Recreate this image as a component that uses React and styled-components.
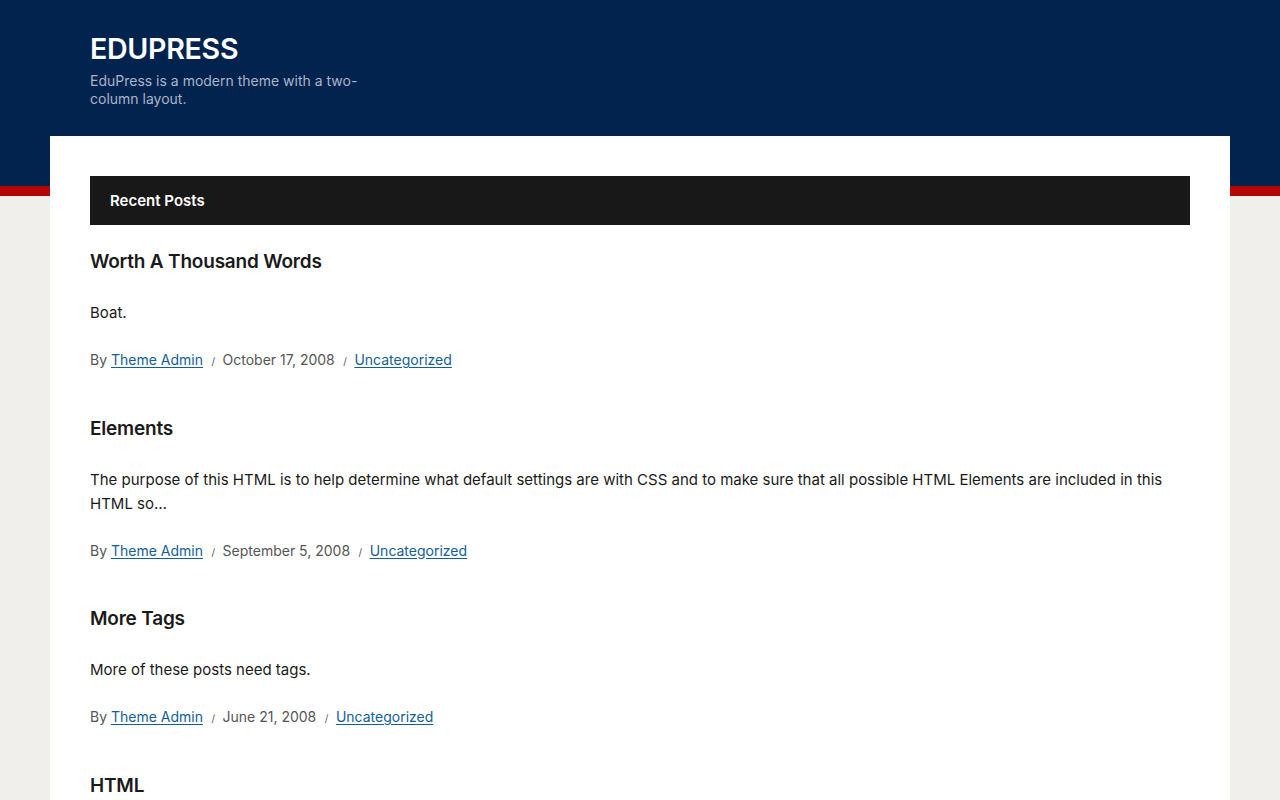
import React from "react";
import styled, { createGlobalStyle } from "styled-components";

const GlobalStyle = createGlobalStyle`
  * {
    box-sizing: border-box;
  }
  body {
    margin: 0;
    font-family: Inter, "Noto Sans", sans-serif;
    /* navy header band, red rule, then the page colour */
    background: linear-gradient(
      to bottom,
      #03234f 0,
      #03234f 186px,
      #b40505 186px,
      #b40505 196px,
      #f0efeb 196px
    );
    min-height: 100vh;
  }
`;

const posts = [
  {
    title: "Worth A Thousand Words",
    excerpt: "Boat.",
    date: "October 17, 2008",
  },
  {
    title: "Elements",
    excerpt:
      "The purpose of this HTML is to help determine what default settings are with CSS and to make sure that all possible HTML Elements are included in this HTML so…",
    date: "September 5, 2008",
  },
  {
    title: "More Tags",
    excerpt: "More of these posts need tags.",
    date: "June 21, 2008",
  },
  {
    title: "HTML",
    excerpt: "",
    date: "",
  },
];

const App = () => {
  return (
    <>
      <GlobalStyle />
      <Header>
        <SiteTitle>EDUPRESS</SiteTitle>
        <Tagline>EduPress is a modern theme with a two-column layout.</Tagline>
      </Header>
      <Main>
        <WidgetTitle>Recent Posts</WidgetTitle>
        {posts.map((post, index) => (
          <Post key={index}>
            <PostTitle>{post.title}</PostTitle>
            {post.excerpt && <Excerpt>{post.excerpt}</Excerpt>}
            {post.date && (
              <Meta>
                By <Link href="#">Theme Admin</Link>
                <Sep>/</Sep>
                {post.date}
                <Sep>/</Sep>
                <Link href="#">Uncategorized</Link>
              </Meta>
            )}
          </Post>
        ))}
      </Main>
    </>
  );
};

const Header = styled.header`
  height: 136px;
  padding: 32px 90px 0;
`;

const SiteTitle = styled.h1`
  margin: 0;
  font-size: 28.6px;
  font-weight: 600;
  line-height: 34px;
  letter-spacing: -0.3px;
  color: #ffffff;
`;

const Tagline = styled.p`
  margin: 6px 0 0;
  width: 272px;
  font-size: 14px;
  line-height: 18px;
  color: #a9b5c9;
`;

const Main = styled.main`
  margin: 0 50px;
  padding: 40px 40px 0;
  background: #ffffff;
  min-height: 664px;
  overflow: hidden;
`;

const WidgetTitle = styled.h2`
  margin: 0;
  height: 49px;
  display: flex;
  align-items: center;
  padding: 0 20px;
  background: #181818;
  color: #ffffff;
  font-size: 15px;
  font-weight: 600;
`;

const Post = styled.article`
  padding-top: 23px;
  padding-bottom: 18.5px;
`;

const PostTitle = styled.h3`
  margin: 0;
  font-size: 19px;
  line-height: 28px;
  font-weight: 600;
  letter-spacing: -0.2px;
  color: #1a1a1a;
`;

const Excerpt = styled.p`
  margin: 25px 0 0;
  font-size: 15px;
  line-height: 24px;
  color: #1a1a1a;
`;

const Meta = styled.div`
  margin-top: 23px;
  font-size: 14px;
  line-height: 24px;
  color: #555555;
`;

const Link = styled.a`
  color: #135e96;
  text-decoration: underline;
  text-underline-offset: 2px;
`;

const Sep = styled.span`
  display: inline-block;
  margin: 0 7.5px 0 8.5px;
  font-size: 10px;
  color: #555555;
`;

export default App;
